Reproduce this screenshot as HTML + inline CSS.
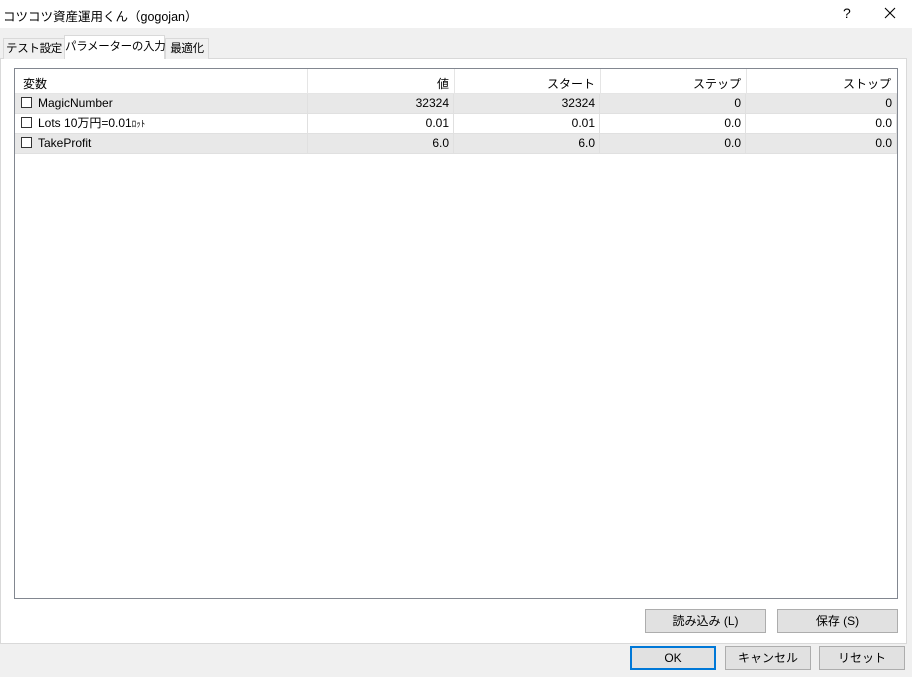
<!DOCTYPE html>
<html><head><meta charset="utf-8"><style>
*{margin:0;padding:0;box-sizing:border-box}
body{width:912px;height:677px;background:#f0f0f0;font-family:"Liberation Sans","Noto Sans CJK JP",sans-serif;font-size:12px;color:#000;position:relative;overflow:hidden;white-space:nowrap}
.a{position:absolute}
.title{left:0;top:0;width:912px;height:28px;background:#fff}
.tab{height:21px;border:1px solid #d9d9d9;border-bottom:none;background:#f0f0f0;text-align:center;line-height:20px;font-size:11.5px;letter-spacing:-0.3px}
.panel{left:0;top:58px;width:907px;height:586px;background:#fff;border:1px solid #d9d9d9}
.lv{left:14px;top:68px;width:884px;height:531px;border:1px solid #828790;background:#fff}
.c{position:absolute;height:20px;line-height:19px;text-align:right;padding-right:4px;border-right:1px solid #e0e0e0;border-bottom:1px solid #e0e0e0}
.g{background:#e8e8e8}
.cb{display:inline-block;width:11px;height:11px;border:1px solid #333;vertical-align:-1px;margin:0 6px 0 6px;background:#fff}
.btn{position:absolute;height:24px;border:1px solid #adadad;background:#e1e1e1;text-align:center;line-height:22px}
</style></head><body>
<div class="a title"><span class="a" style="left:3px;top:6px;font-size:12.5px">コツコツ資産運用くん（gogojan）</span>
<span class="a" style="left:843px;top:5px;font-size:14px">?</span>
<svg class="a" style="left:884px;top:7px" width="12" height="12"><path d="M1 1L11 11M11 1L1 11" stroke="#000" stroke-width="1.1"/></svg></div>
<div class="a panel"></div>
<div class="a tab" style="left:3px;top:38px;width:62px">テスト設定</div>
<div class="a tab" style="left:64px;top:35px;width:101px;height:24px;background:#fff;line-height:22px">パラメーターの入力</div>
<div class="a tab" style="left:165px;top:38px;width:44px">最適化</div>
<div class="a lv">
<div class="a" style="left:0;top:0;width:882px;height:25px;border-bottom:1px solid #e5e5e5"></div>
<div class="a" style="left:8px;top:6px">変数</div>
<div class="a" style="left:292px;top:0;height:25px;border-left:1px solid #e5e5e5"></div>
<div class="a" style="left:439px;top:0;height:25px;border-left:1px solid #e5e5e5"></div>
<div class="a" style="left:585px;top:0;height:25px;border-left:1px solid #e5e5e5"></div>
<div class="a" style="left:731px;top:0;height:25px;border-left:1px solid #e5e5e5"></div>
<div class="a" style="left:400px;top:6px;width:34px;text-align:right">値</div>
<div class="a" style="left:500px;top:6px;width:80px;text-align:right">スタート</div>
<div class="a" style="left:646px;top:6px;width:80px;text-align:right">ステップ</div>
<div class="a" style="left:796px;top:6px;width:80px;text-align:right">ストップ</div>
</div>
<div class="c g" style="left:15px;top:94px;width:293px;text-align:left"><span class="cb"></span>MagicNumber</div>
<div class="c g" style="left:308px;top:94px;width:146px">32324</div>
<div class="c g" style="left:454px;top:94px;width:146px">32324</div>
<div class="c g" style="left:600px;top:94px;width:146px">0</div>
<div class="c g" style="left:746px;top:94px;width:151px">0</div>
<div class="c" style="left:15px;top:114px;width:293px;text-align:left"><span class="cb"></span>Lots 10万円=0.01<span style="font-size:9px">ﾛｯﾄ</span></div>
<div class="c" style="left:308px;top:114px;width:146px">0.01</div>
<div class="c" style="left:454px;top:114px;width:146px">0.01</div>
<div class="c" style="left:600px;top:114px;width:146px">0.0</div>
<div class="c" style="left:746px;top:114px;width:151px">0.0</div>
<div class="c g" style="left:15px;top:134px;width:293px;text-align:left"><span class="cb"></span>TakeProfit</div>
<div class="c g" style="left:308px;top:134px;width:146px">6.0</div>
<div class="c g" style="left:454px;top:134px;width:146px">6.0</div>
<div class="c g" style="left:600px;top:134px;width:146px">0.0</div>
<div class="c g" style="left:746px;top:134px;width:151px">0.0</div>
<div class="btn" style="left:645px;top:609px;width:121px">読み込み (L)</div>
<div class="btn" style="left:777px;top:609px;width:121px">保存 (S)</div>
<div class="btn" style="left:630px;top:646px;width:86px;border:2px solid #0078d7;line-height:20px">OK</div>
<div class="btn" style="left:725px;top:646px;width:86px">キャンセル</div>
<div class="btn" style="left:819px;top:646px;width:86px">リセット</div>
</body></html>
